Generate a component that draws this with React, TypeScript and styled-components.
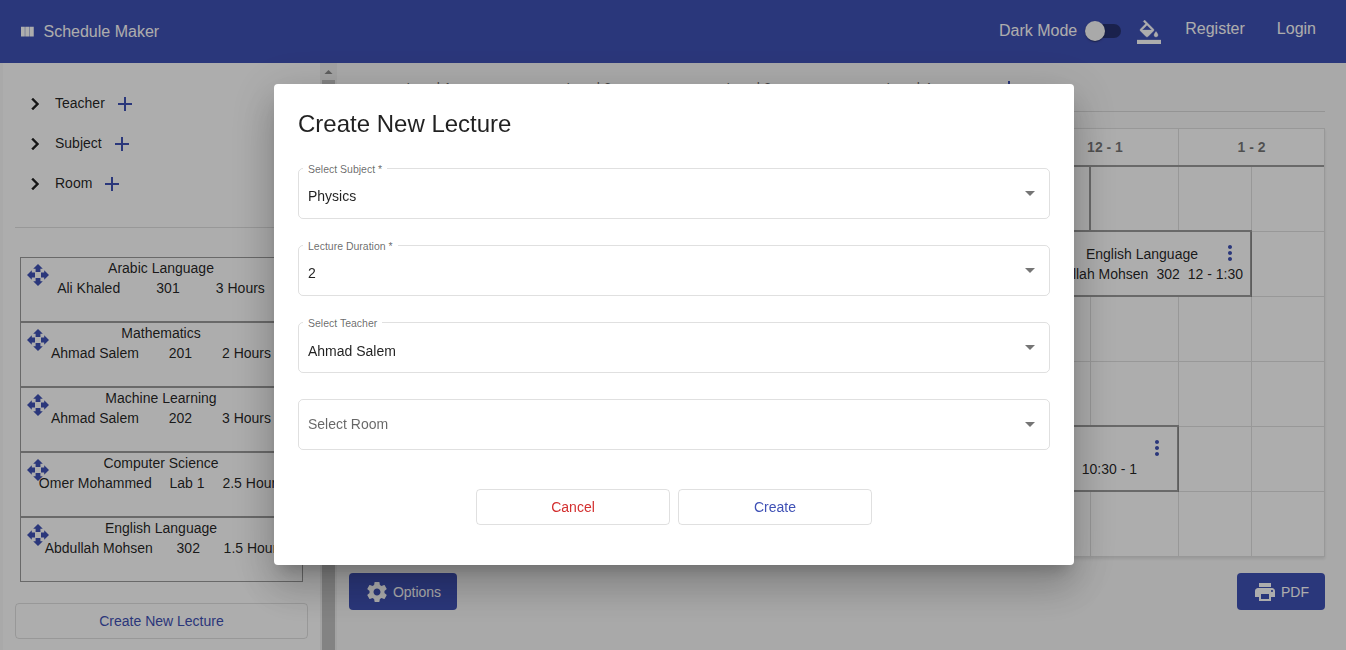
import React from "react";
import styled, { createGlobalStyle } from "styled-components";

const PRIMARY = "#3f51b5";
const LINE = "rgba(0, 0, 0, 0.12)";
const STRONG = "#9b9b9b";

const GlobalStyle = createGlobalStyle`
  * { box-sizing: border-box; }
  html, body, #root { height: 100%; }
  body {
    margin: 0;
    overflow: hidden;
    background: #fafafa;
    color: rgba(0, 0, 0, 0.87);
    font: 14px/20px "Liberation Sans", Arial, sans-serif;
  }
  button { font: inherit; background: none; cursor: pointer; }
`;

const Page = styled.div`
  display: flex;
  flex-direction: column;
  height: 650px;
`;

const Toolbar = styled.header`
  display: flex;
  align-items: center;
  height: 63px;
  flex: none;
  padding: 0 30px 0 18px;
  background: ${PRIMARY};
  color: #fff;
  font-size: 16px;
`;

const Brand = styled.div`
  display: flex;
  align-items: center;
  gap: 7.5px;
  margin-right: auto;
`;

const DarkMode = styled.label`
  display: flex;
  align-items: center;
  gap: 8px;
  margin: -2px 16px 0 0;
`;

const Track = styled.span`
  display: flex;
  align-items: center;
  width: 36px;
  height: 14px;
  margin-top: 1px;
  border-radius: 7px;
  background: rgba(0, 0, 0, 0.38);
`;

const Thumb = styled.span`
  width: 20px;
  height: 20px;
  border-radius: 50%;
  background: #fafafa;
  box-shadow: 0 2px 1px -1px rgba(0, 0, 0, 0.2), 0 1px 1px rgba(0, 0, 0, 0.14), 0 1px 3px rgba(0, 0, 0, 0.12);
`;

const NavLink = styled.a<{ $gap: number }>`
  margin: -6px 0 0 ${(p) => p.$gap}px;
`;

const Body = styled.div`
  display: flex;
  flex: 1;
  min-height: 0;
`;

const Sidebar = styled.aside`
  display: flex;
  flex-direction: column;
  width: 317px;
  margin-left: 3px;
  padding: 21px 12px 0;
  background: #fff;
`;

const TreeRow = styled.div`
  display: flex;
  align-items: center;
  height: 40px;
  padding-left: 8px;
`;

const TreeLabel = styled.span`
  margin: -2px 8px 0 8px;
`;

const Divider = styled.hr`
  width: 293px;
  height: 1px;
  flex: none;
  margin: 23px 0 29px;
  border: 0;
  background: ${LINE};
`;

const LectureList = styled.div`
  width: 283px;
  margin-left: 5px;
`;

const LectureCard = styled.div`
  position: relative;
  height: 65px;
  padding-right: 1px;
  border: 1px solid ${STRONG};
  text-align: center;
`;

const DragHandle = styled.span`
  position: absolute;
  left: 5px;
  top: 5px;
  line-height: 0;
`;

const LectureInfo = styled.div`
  position: relative;
  display: flex;
  justify-content: space-evenly;
  white-space: nowrap;
`;

const OutlineButton = styled.button<{ $width: number; $color: string }>`
  width: ${(p) => p.$width}px;
  height: 36px;
  padding: 0;
  border: 1px solid ${LINE};
  border-radius: 4px;
  color: ${(p) => p.$color};
`;

const SidebarAction = styled.div`
  margin-top: 21px;
`;

const Scrollbar = styled.div`
  display: flex;
  flex-direction: column;
  align-items: center;
  width: 17px;
  background: #f1f1f1;
`;

const ScrollArrow = styled.span`
  height: 17px;
  line-height: 0;
`;

const ScrollThumb = styled.div`
  width: 13px;
  flex: 1;
  background: #c1c1c1;
`;

const Main = styled.main`
  display: flex;
  flex-direction: column;
  flex: 1;
  padding: 0 21px 0 12px;
`;

const Tabs = styled.nav`
  display: flex;
  align-items: center;
  height: 49px;
  flex: none;
  border-bottom: 1px solid ${LINE};
`;

const Tab = styled.span`
  width: 160px;
  padding-top: 2px;
  text-align: center;
  color: rgba(0, 0, 0, 0.6);
`;

const AddTab = styled.span`
  margin: 1px 0 0 7.5px;
  line-height: 0;
`;

const Timetable = styled.section`
  margin-top: 16px;
  background: #fff;
  border-right: 1px solid ${LINE};
  box-shadow: 0 2px 3px rgba(0, 0, 0, 0.1);
`;

const HeadRow = styled.div`
  display: grid;
  grid-template-columns: 1fr 147px 146px;
  height: 39px;
  border-top: 1px solid ${LINE};
  border-bottom: 2px solid ${STRONG};
`;

const HeadCell = styled.div`
  display: flex;
  align-items: center;
  justify-content: center;
  border-left: 1px solid ${LINE};
  color: rgba(0, 0, 0, 0.54);
  font-weight: bold;
`;

const SlotRow = styled.div<{ $columns: string }>`
  display: grid;
  grid-template-columns: ${(p) => p.$columns};
  height: 65px;
`;

const Slot = styled.div<{ $strong?: boolean }>`
  border-left: ${(p) => (p.$strong ? `2px solid ${STRONG}` : `1px solid ${LINE}`)};
  border-bottom: 1px solid ${LINE};
  margin-left: ${(p) => (p.$strong ? -1 : 0)}px;
`;

const Booked = styled.div`
  display: flex;
  flex-direction: column;
  justify-content: center;
  margin: -2px -1px 0 0;
  padding-top: 1px;
  border: 2px solid ${STRONG};
`;

const BookedTop = styled.div`
  display: flex;
  align-items: center;
  justify-content: flex-end;
  height: 20px;
  padding-right: 8px;
`;

const BookedInfo = styled.div<{ $right: number }>`
  display: flex;
  justify-content: flex-end;
  gap: 8px;
  padding-right: ${(p) => p.$right}px;
  white-space: nowrap;
`;

const MenuDots = styled.span`
  margin: -2px 0 0 20px;
  line-height: 0;
`;

const Actions = styled.div`
  display: flex;
  justify-content: space-between;
  margin-top: 16px;
`;

const SolidButton = styled.button<{ $width: number }>`
  display: flex;
  align-items: center;
  justify-content: center;
  gap: 4px;
  width: ${(p) => p.$width}px;
  height: 37px;
  padding: 0;
  border: 0;
  border-radius: 4px;
  background: ${PRIMARY};
  color: #fff;
`;

const Backdrop = styled.div`
  position: fixed;
  inset: 0;
  display: flex;
  align-items: center;
  justify-content: center;
  padding: 0 0 1px 2px;
  background: rgba(0, 0, 0, 0.32);
`;

const Dialog = styled.div`
  width: 800px;
  height: 481px;
  padding: 24px;
  border-radius: 4px;
  background: #fff;
  box-shadow: 0 11px 15px -7px rgba(0, 0, 0, 0.2), 0 24px 38px 3px rgba(0, 0, 0, 0.14),
    0 9px 46px 8px rgba(0, 0, 0, 0.12);
`;

const Title = styled.h2`
  margin: 0 0 28px;
  font-size: 24px;
  line-height: 32px;
  font-weight: 400;
`;

const Field = styled.fieldset`
  display: flex;
  align-items: center;
  justify-content: space-between;
  position: relative;
  height: 51px;
  margin: 0 0 26px;
  padding: 0 7px 0 9px;
  border: 1px solid ${LINE};
  border-radius: 5px;
`;

const FieldLabel = styled.span`
  position: absolute;
  left: 4px;
  top: -7px;
  padding: 0 5px;
  background: #fff;
  color: rgba(0, 0, 0, 0.6);
  font-size: 10.5px;
  line-height: 14px;
`;

const Value = styled.span<{ $offset: number; $empty?: boolean }>`
  margin-top: ${(p) => p.$offset}px;
  color: ${(p) => (p.$empty ? "rgba(0, 0, 0, 0.6)" : "inherit")};
`;

const Caret = styled.svg`
  margin-top: -2px;
  color: rgba(0, 0, 0, 0.54);
`;

const DialogActions = styled.div`
  display: flex;
  justify-content: center;
  gap: 8px;
  margin-top: 39px;
`;

const paths = {
  columns: "M9.6 18h5.5V5H9.6v13zM4 18h5.1V5H4v13zM15.6 5v13H21V5h-5.4z",
  fill: "M16.56 8.94L7.62 0 6.21 1.41l2.38 2.38-5.15 5.15c-.59.59-.59 1.54 0 2.12l5.5 5.5c.29.29.68.44 1.06.44s.77-.15 1.06-.44l5.5-5.5c.59-.58.59-1.53 0-2.12zM5.21 10L10 5.21 14.79 10H5.21zM19 11.5s-2 2.17-2 3.5c0 1.1.9 2 2 2s2-.9 2-2c0-1.33-2-3.5-2-3.5zM0 20h24v4H0z",
  chevron: "M10 6L8.59 7.41 13.17 12l-4.58 4.59L10 18l6-6z",
  add: "M19 13h-6v6h-2v-6H5v-2h6V5h2v6h6v2z",
  move: "M12 1l4.8 4.8h-2.4V9H9.6V5.8H7.2zM12 23l4.8-4.8h-2.4V15H9.6v3.2H7.2zM1 12l4.8-4.8v2.4H9v4.8H5.8v2.4zM23 12l-4.8-4.8v2.4H15v4.8h3.2v2.4z",
  more: "M12 8c1.1 0 2-.9 2-2s-.9-2-2-2-2 .9-2 2 .9 2 2 2zm0 2c-1.1 0-2 .9-2 2s.9 2 2 2 2-.9 2-2-.9-2-2-2zm0 6c-1.1 0-2 .9-2 2s.9 2 2 2 2-.9 2-2-.9-2-2-2z",
  settings:
    "M19.43 12.98c.04-.32.07-.64.07-.98s-.03-.66-.07-.98l2.11-1.65c.19-.15.24-.42.12-.64l-2-3.46c-.12-.22-.39-.3-.61-.22l-2.49 1c-.52-.4-1.08-.73-1.69-.98l-.38-2.65C14.46 2.18 14.25 2 14 2h-4c-.25 0-.46.18-.49.42l-.38 2.65c-.61.25-1.17.59-1.69.98l-2.49-1c-.23-.09-.49 0-.61.22l-2 3.46c-.13.22-.07.49.12.64l2.11 1.65c-.04.32-.07.65-.07.98s.03.66.07.98l-2.11 1.65c-.19.15-.24.42-.12.64l2 3.46c.12.22.39.3.61.22l2.49-1c.52.4 1.08.73 1.69.98l.38 2.65c.03.24.24.42.49.42h4c.25 0 .46-.18.49-.42l.38-2.65c.61-.25 1.17-.59 1.69-.98l2.49 1c.23.09.49 0 .61-.22l2-3.46c.12-.22.07-.49-.12-.64l-2.11-1.65zM12 15.5c-1.93 0-3.5-1.57-3.5-3.5s1.57-3.5 3.5-3.5 3.5 1.57 3.5 3.5-1.57 3.5-3.5 3.5z",
  print: "M19 8H5c-1.66 0-3 1.34-3 3v6h4v4h12v-4h4v-6c0-1.66-1.34-3-3-3zm-3 11H8v-5h8v5zm3-7c-.55 0-1-.45-1-1s.45-1 1-1 1 .45 1 1-.45 1-1 1zm-1-9H6v4h12V3z",
};

interface IconProps {
  name: keyof typeof paths;
  size?: number;
  color?: string;
  weight?: number;
}

function Icon({ name, size = 24, color = "currentColor", weight = 0 }: IconProps) {
  return (
    <svg width={size} height={size} viewBox="0 0 24 24" fill={color} stroke={color} strokeWidth={weight}>
      <path d={paths[name]} />
    </svg>
  );
}

const lectures = [
  ["Arabic Language", "Ali Khaled", "301", "3 Hours"],
  ["Mathematics", "Ahmad Salem", "201", "2 Hours"],
  ["Machine Learning", "Ahmad Salem", "202", "3 Hours"],
  ["Computer Science", "Omer Mohammed", "Lab 1", "2.5 Hours"],
  ["English Language", "Abdullah Mohsen", "302", "1.5 Hour"],
];

const fields = [
  { label: "Select Subject *", value: "Physics", offset: 5 },
  { label: "Lecture Duration *", value: "2", offset: 5 },
  { label: "Select Teacher", value: "Ahmad Salem", offset: 7 },
  { value: "Select Room", offset: -2 },
];

const DAY = "1fr 88px 73px 73px";

function EmptyRow({ strong = false }: { strong?: boolean }) {
  return (
    <SlotRow $columns={DAY}>
      <Slot />
      <Slot $strong={strong} />
      <Slot />
      <Slot />
    </SlotRow>
  );
}

export default function App() {
  return (
    <>
      <GlobalStyle />
      <Page>
        <Toolbar>
          <Brand>
            <Icon name="columns" size={18} />
            Schedule Maker
          </Brand>
          <DarkMode>
            Dark Mode
            <Track>
              <Thumb />
            </Track>
          </DarkMode>
          <Icon name="fill" weight={0.3} />
          <NavLink $gap={24}>Register</NavLink>
          <NavLink $gap={32}>Login</NavLink>
        </Toolbar>
        <Body>
          <Sidebar>
            {["Teacher", "Subject", "Room"].map((label) => (
              <TreeRow key={label}>
                <Icon name="chevron" weight={0.4} />
                <TreeLabel>{label}</TreeLabel>
                <Icon name="add" color={PRIMARY} />
              </TreeRow>
            ))}
            <Divider />
            <LectureList>
              {lectures.map(([title, teacher, room, hours]) => (
                <LectureCard key={title}>
                  <DragHandle>
                    <Icon name="move" color={PRIMARY} />
                  </DragHandle>
                  {title}
                  <LectureInfo>
                    <span>{teacher}</span>
                    <span>{room}</span>
                    <span>{hours}</span>
                  </LectureInfo>
                </LectureCard>
              ))}
            </LectureList>
            <SidebarAction>
              <OutlineButton $width={293} $color={PRIMARY}>
                Create New Lecture
              </OutlineButton>
            </SidebarAction>
          </Sidebar>
          <Scrollbar>
            <ScrollArrow>
              <svg width="17" height="17" viewBox="0 0 17 17" fill="#8b8b8b">
                <path d="M4.5 11L8.5 7l4 4z" />
              </svg>
            </ScrollArrow>
            <ScrollThumb />
          </Scrollbar>
          <Main>
            <Tabs>
              {["Level 1", "Level 2", "Level 3", "Level 4"].map((level) => (
                <Tab key={level}>{level}</Tab>
              ))}
              <AddTab>
                <Icon name="add" color={PRIMARY} />
              </AddTab>
            </Tabs>
            <Timetable>
              <HeadRow>
                <HeadCell />
                <HeadCell>12 - 1</HeadCell>
                <HeadCell>1 - 2</HeadCell>
              </HeadRow>
              <EmptyRow strong />
              <SlotRow $columns="1fr 220px 73px">
                <Slot />
                <Booked>
                  <BookedTop>
                    English Language
                    <MenuDots>
                      <Icon name="more" color={PRIMARY} />
                    </MenuDots>
                  </BookedTop>
                  <BookedInfo $right={7}>
                    <span>Abdullah Mohsen</span>
                    <span>302</span>
                    <span>12 - 1:30</span>
                  </BookedInfo>
                </Booked>
                <Slot />
              </SlotRow>
              <EmptyRow />
              <EmptyRow />
              <SlotRow $columns="1fr 366px 73px 73px">
                <Slot />
                <Booked>
                  <BookedTop>
                    <MenuDots>
                      <Icon name="more" color={PRIMARY} />
                    </MenuDots>
                  </BookedTop>
                  <BookedInfo $right={40}>
                    <span>10:30 - 1</span>
                  </BookedInfo>
                </Booked>
                <Slot />
                <Slot />
              </SlotRow>
              <EmptyRow />
            </Timetable>
            <Actions>
              <SolidButton $width={108}>
                <Icon name="settings" />
                Options
              </SolidButton>
              <SolidButton $width={88}>
                <Icon name="print" />
                PDF
              </SolidButton>
            </Actions>
          </Main>
        </Body>
      </Page>
      <Backdrop>
        <Dialog role="dialog">
          <Title>Create New Lecture</Title>
          {fields.map(({ label, value, offset }) => (
            <Field key={value}>
              {label && <FieldLabel>{label}</FieldLabel>}
              <Value $offset={offset} $empty={!label}>
                {value}
              </Value>
              <Caret width="24" height="24" viewBox="0 0 24 24" fill="currentColor">
                <path d="M7 10l5 5 5-5z" />
              </Caret>
            </Field>
          ))}
          <DialogActions>
            <OutlineButton $width={194} $color="#d32f2f">
              Cancel
            </OutlineButton>
            <OutlineButton $width={194} $color={PRIMARY}>
              Create
            </OutlineButton>
          </DialogActions>
        </Dialog>
      </Backdrop>
    </>
  );
}
